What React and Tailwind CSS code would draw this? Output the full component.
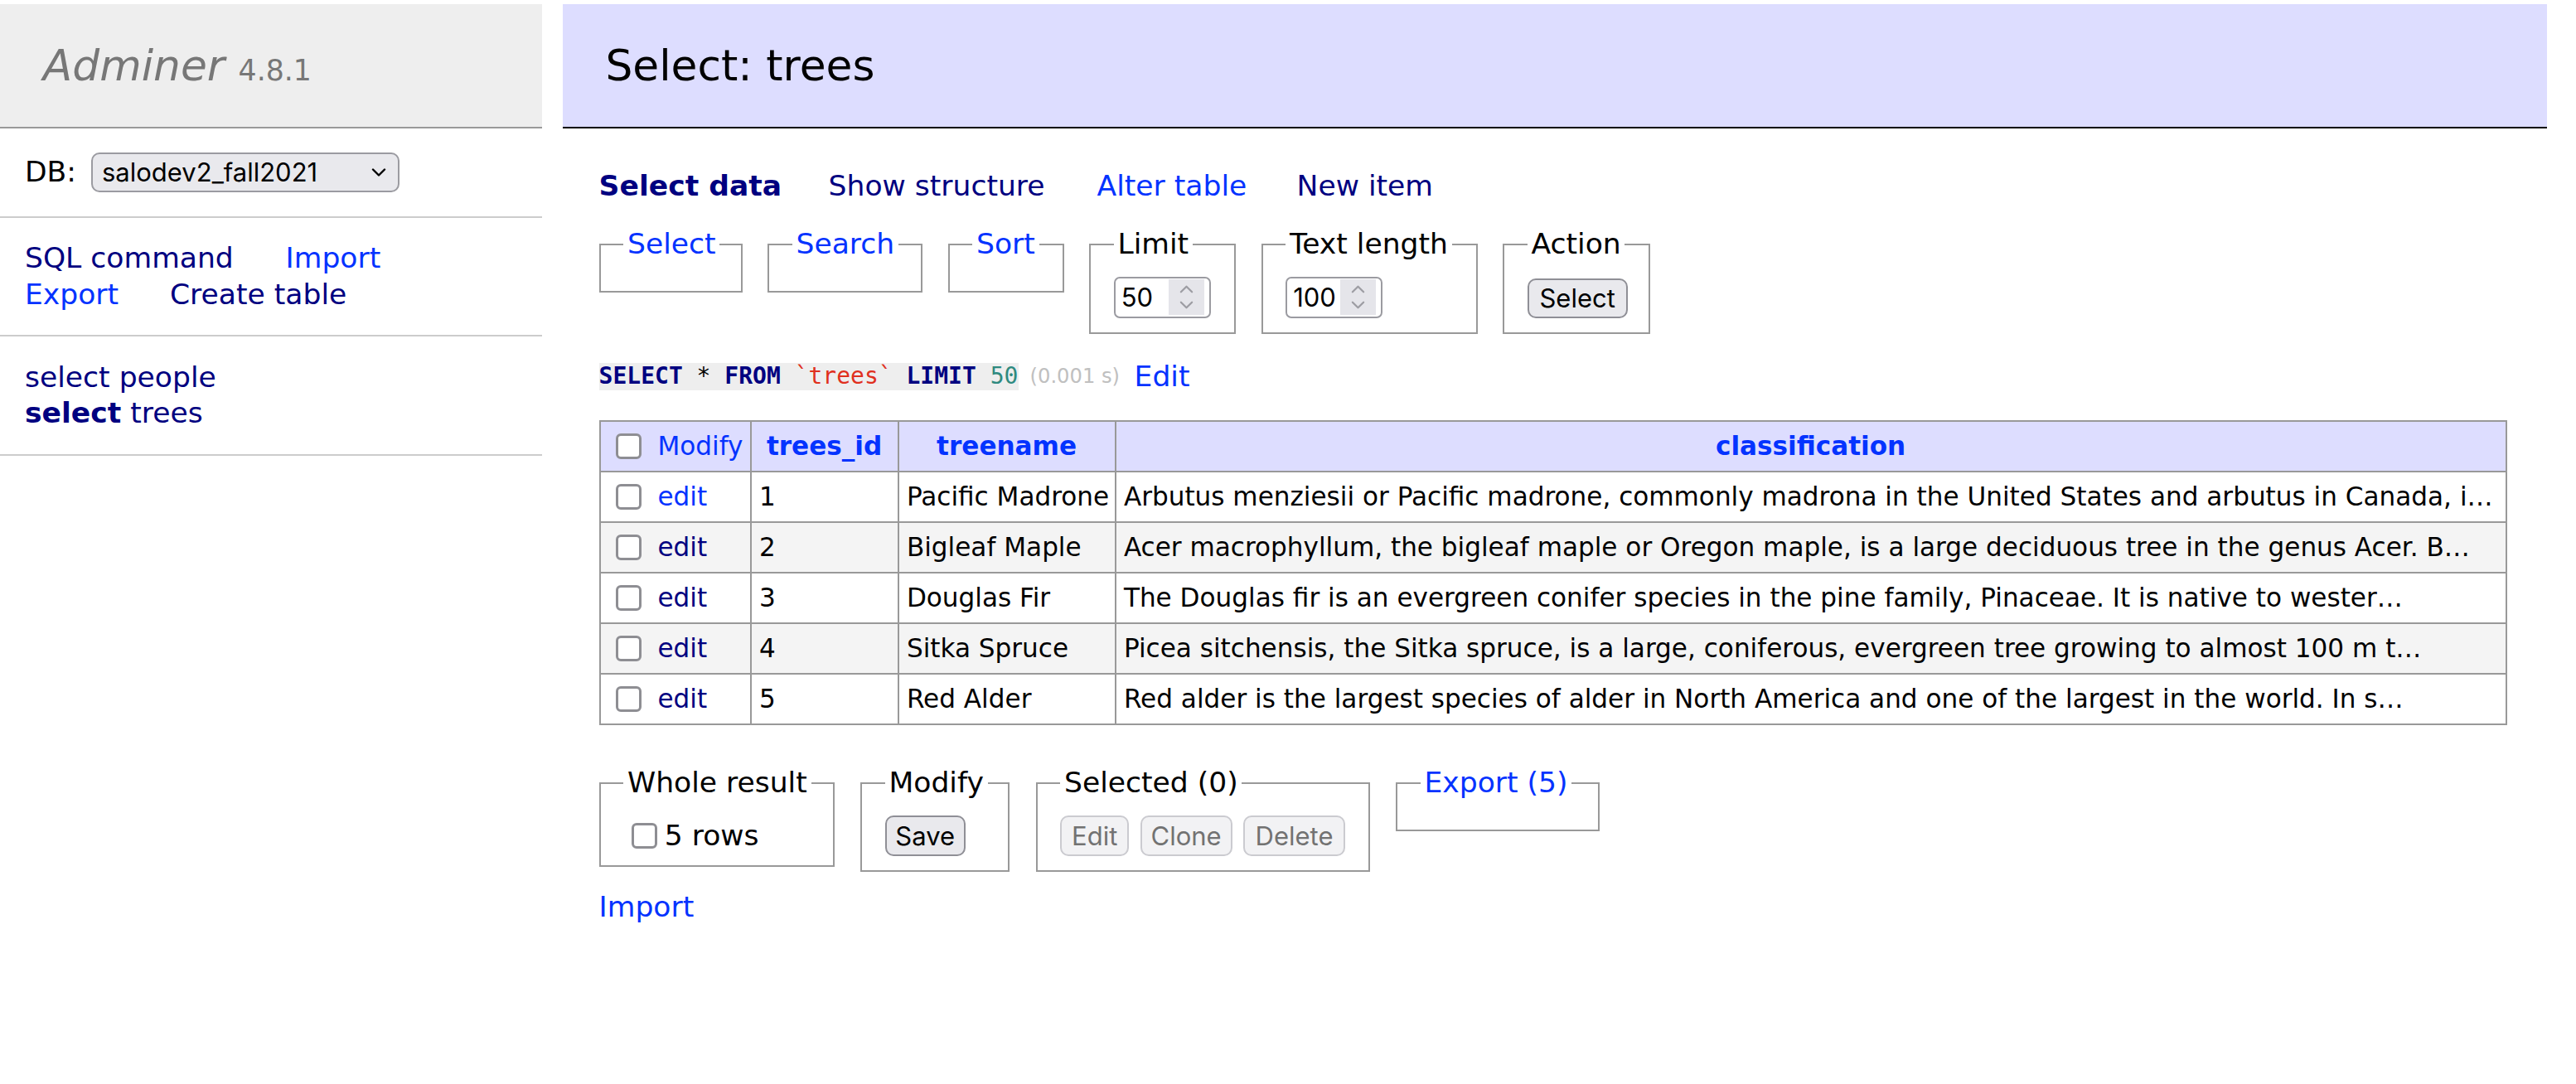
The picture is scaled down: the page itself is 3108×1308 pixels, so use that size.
import React from "react";

const blue = "text-[#0433ff]";
const navy = "text-[#000080]";
const ui = "font-['Inter',sans-serif]";

const trees = [
  {
    id: 1,
    name: "Pacific Madrone",
    text: "Arbutus menziesii or Pacific madrone, commonly madrona in the United States and arbutus in Canada, i…",
    seen: false,
  },
  {
    id: 2,
    name: "Bigleaf Maple",
    text: "Acer macrophyllum, the bigleaf maple or Oregon maple, is a large deciduous tree in the genus Acer. B…",
    seen: true,
  },
  {
    id: 3,
    name: "Douglas Fir",
    text: "The Douglas fir is an evergreen conifer species in the pine family, Pinaceae. It is native to wester…",
    seen: true,
  },
  {
    id: 4,
    name: "Sitka Spruce",
    text: "Picea sitchensis, the Sitka spruce, is a large, coniferous, evergreen tree growing to almost 100 m t…",
    seen: true,
  },
  {
    id: 5,
    name: "Red Alder",
    text: "Red alder is the largest species of alder in North America and one of the largest in the world. In s…",
    seen: true,
  },
];

function Checkbox() {
  return (
    <span className="inline-block h-[31px] w-[31px] shrink-0 rounded-[6px] border-[3px] border-[#8e8e93] bg-white" />
  );
}

function Chevron({ up, className }) {
  return (
    <svg
      viewBox="0 0 18 10"
      className={className}
      fill="none"
      stroke="currentColor"
      strokeWidth="2.4"
      strokeLinecap="round"
      strokeLinejoin="round"
    >
      <path d={up ? "M2 8.5 9 1.5 16 8.5" : "M2 1.5 9 8.5 16 1.5"} />
    </svg>
  );
}

function NumberBox({ value }) {
  return (
    <div className="flex h-[50px] w-[117px] items-center rounded-[7px] border-2 border-[#9b9ba1] bg-white pl-[7px] pr-[6px]">
      <span className={`flex-1 text-[31px] leading-none ${ui}`}>{value}</span>
      <span className="flex h-[43px] w-[43px] flex-col items-center justify-center gap-[9px] bg-[#e5e5ea] text-[#9d9da3]">
        <Chevron up className="h-[10px] w-[17px]" />
        <Chevron className="h-[10px] w-[17px]" />
      </span>
    </div>
  );
}

function Field({ legend, className, children }) {
  return (
    <fieldset className={`min-w-0 shrink-0 border-2 border-[#999] px-[27.6px] py-[17.3px] ${className}`}>
      <legend className="whitespace-nowrap px-[4.8px]">{legend}</legend>
      {children}
    </fieldset>
  );
}

function Btn({ children, className, disabled }) {
  return (
    <button
      type="button"
      disabled={disabled}
      className={`flex items-center justify-center rounded-[10px] border-2 text-[31px] leading-none ${ui} ${
        disabled
          ? "border-[#cbcbd0] bg-[#f2f2f4] text-[#727272]"
          : "border-[#8f8f96] bg-[#e9e9ed] text-black"
      } ${className}`}
    >
      {children}
    </button>
  );
}

function Sidebar() {
  return (
    <aside className="w-[654px] shrink-0">
      <h1 className="border-b-2 border-[#999] bg-[#eee] px-[51.8px] py-[41.5px] text-[51.84px] font-normal leading-[1.25] text-[#777]">
        <span className="italic">Adminer</span> <span className="text-[34.7px]">4.8.1</span>
      </h1>
      <div className="flex h-[108px] items-center border-b-2 border-[#ccc] pl-[30px]">
        <span className="w-[80px]">DB:</span>
        <div className="flex h-[48px] w-[372px] items-center justify-between rounded-[10px] border-2 border-[#9b9ba1] bg-[#e9e9ed] pl-[11px] pr-[14px]">
          <span className={`text-[31px] leading-none ${ui}`}>salodev2_fall2021</span>
          <Chevron className="h-[10px] w-[18px] text-black" />
        </div>
      </div>
      <div className="border-b-2 border-[#ccc] py-[27.6px] pl-[30px]">
        <div className="flex">
          <span className={`w-[314.6px] ${navy}`}>SQL command</span>
          <span className={blue}>Import</span>
        </div>
        <div className="flex">
          <span className={`w-[175px] ${blue}`}>Export</span>
          <span className={navy}>Create table</span>
        </div>
      </div>
      <div className={`border-b-2 border-[#ccc] py-[27.6px] pl-[30px] ${navy}`}>
        <div>select people</div>
        <div>
          <b>select</b> trees
        </div>
      </div>
    </aside>
  );
}

function ResultTable() {
  const cell = "border-2 border-[#999] px-[9.3px] align-middle whitespace-nowrap overflow-hidden";
  return (
    <table className="mt-[33px] w-[2302px] table-fixed border-collapse text-[31.1px] leading-[1.25]">
      <colgroup>
        <col className="w-[182px]" />
        <col className="w-[178px]" />
        <col className="w-[262px]" />
        <col />
      </colgroup>
      <thead>
        <tr className="h-[61px] bg-[#ddf]">
          <td className={cell}>
            <div className="flex items-center gap-[19px] pl-[9.6px]">
              <Checkbox />
              <span className={blue}>Modify</span>
            </div>
          </td>
          <th className={`${cell} px-[15.5px] text-center font-bold ${blue}`}>trees_id</th>
          <th className={`${cell} px-[15.5px] text-center font-bold ${blue}`}>treename</th>
          <th className={`${cell} px-[15.5px] text-center font-bold ${blue}`}>classification</th>
        </tr>
      </thead>
      <tbody>
        {trees.map((t, i) => (
          <tr key={t.id} className={`h-[61px] ${i % 2 ? "bg-[#f4f4f4]" : "bg-white"}`}>
            <td className={cell}>
              <div className="flex items-center gap-[19px] pl-[9.6px]">
                <Checkbox />
                <span className={t.seen ? navy : blue}>edit</span>
              </div>
            </td>
            <td className={cell}>{t.id}</td>
            <td className={cell}>{t.name}</td>
            <td className={cell}>{t.text}</td>
          </tr>
        ))}
      </tbody>
    </table>
  );
}

export default function App() {
  return (
    <div className="flex min-h-screen w-[3108px] bg-white pt-[5px] font-['DejaVu_Sans',Verdana,sans-serif] text-[34.56px] leading-[1.25] text-black">
      <Sidebar />
      <main className="flex-1 pl-[24.6px] pr-[35px]">
        <h2 className="border-b-2 border-black bg-[#ddf] px-[51.8px] py-[41.5px] text-[51.84px] font-normal leading-[1.25]">
          Select: trees
        </h2>
        <div className="ml-[44px]">
          <div className="mt-[48px] flex h-[43.2px] items-center">
            <b className={`w-[277px] ${navy}`}>Select data</b>
            <span className={`w-[324px] ${navy}`}>Show structure</span>
            <span className={`w-[241px] ${blue}`}>Alter table</span>
            <span className={navy}>New item</span>
          </div>

          <div className="mt-[27.5px] flex items-start gap-[30.5px]">
            <Field className="w-[173px]" legend={<span className={blue}>Select</span>} />
            <Field className="w-[187px]" legend={<span className={blue}>Search</span>} />
            <Field className="w-[140px]" legend={<span className={blue}>Sort</span>} />
            <Field className="w-[177px]" legend="Limit">
              <NumberBox value="50" />
            </Field>
            <Field className="w-[261px]" legend="Text length">
              <NumberBox value="100" />
            </Field>
            <Field className="w-[178px]" legend="Action">
              <Btn className="mt-[2px] h-[48px] w-[121px]">Select</Btn>
            </Field>
          </div>

          <div className="mt-[27.6px] flex h-[43.2px] items-center whitespace-pre pt-[4px]">
            <code className="w-[506px] bg-[#eee] font-['DejaVu_Sans_Mono',monospace] text-[28px] leading-[1.16]">
              <b className={navy}>SELECT</b>
              {" * "}
              <b className={navy}>FROM</b> <span className="text-[#e0301e]">`trees`</span>{" "}
              <b className={navy}>LIMIT</b> <span className="text-[#2f8a80]">50</span>
            </code>
            <span className="ml-[14px] w-[112px] text-[24.2px] text-[#c0c0c0]">(0.001 s)</span>
            <span className={`ml-[14px] ${blue}`}>Edit</span>
          </div>

          <ResultTable />

          <div className="mt-[48px] flex items-start gap-[31.5px]">
            <Field className="w-[284px]" legend="Whole result">
              <div className="flex h-[43.2px] items-center gap-[9px] pl-[9.6px] pt-[6px]">
                <Checkbox />
                <span>5 rows</span>
              </div>
            </Field>
            <Field className="w-[180px]" legend="Modify">
              <Btn className="h-[49px] w-[97px]">Save</Btn>
            </Field>
            <Field className="w-[403px]" legend="Selected (0)">
              <div className="flex gap-[13.5px]">
                <Btn disabled className="h-[49px] w-[83px]">Edit</Btn>
                <Btn disabled className="h-[49px] w-[111px]">Clone</Btn>
                <Btn disabled className="h-[49px] w-[123px]">Delete</Btn>
              </div>
            </Field>
            <Field className="w-[246px]" legend={<span className={blue}>Export (5)</span>} />
          </div>

          <div className={`mt-[21px] ${blue}`}>Import</div>
        </div>
      </main>
    </div>
  );
}
